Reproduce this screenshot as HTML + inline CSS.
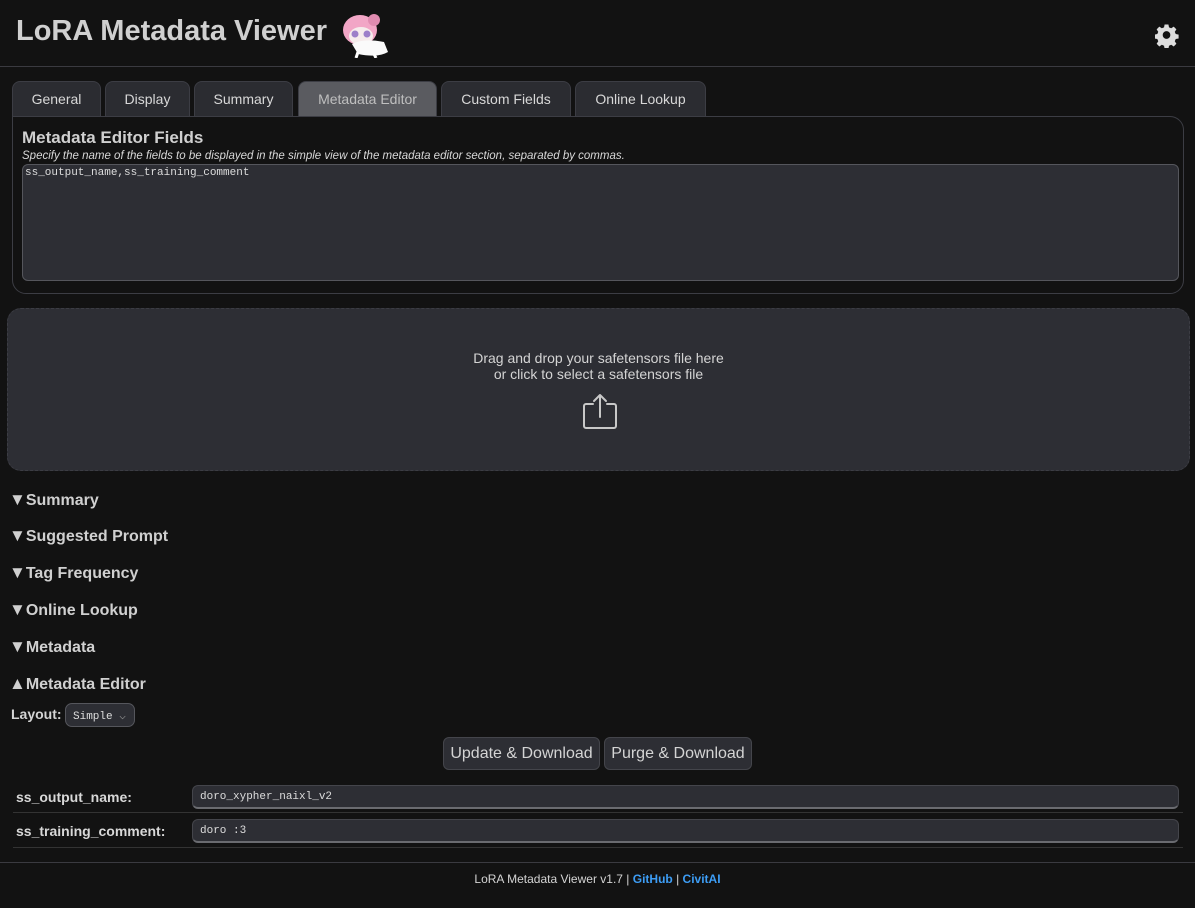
<!DOCTYPE html>
<html><head><meta charset="utf-8"><style>
*{box-sizing:border-box;margin:0;padding:0}
body{width:1195px;height:908px;background:#121212;color:#d4d4d4;font-family:"Liberation Sans",sans-serif;position:relative;overflow:hidden}
.abs{position:absolute}
h1{position:absolute;left:16px;top:15px;font-size:29px;font-weight:bold;color:#d0d0d0}
.hr{position:absolute;left:0;width:1195px;height:1px;background:#3a3a40}
.tab{position:absolute;top:81px;height:36px;background:#2b2c31;border:1px solid #3c3d44;border-bottom:none;border-radius:8px 8px 0 0;font-size:14px;color:#d8d8d8;text-align:center;line-height:35px}
.tab.act{background:#5a5b60;color:#bfbfbf}
.panel{position:absolute;left:12px;top:116px;width:1172px;height:178px;border:1px solid #3c3d44;border-radius:0 14px 14px 14px}
textarea{position:absolute;left:22px;top:164px;width:1157px;height:117px;background:#2d2e34;border:1px solid #55565c;border-radius:6px;color:#ddd;font-family:"Liberation Mono",monospace;font-size:11px;padding:2px;resize:none}
.drop{position:absolute;left:7px;top:308px;width:1183px;height:163px;background:#2d2e34;border:1px dashed #3c3d44;border-radius:14px;text-align:center;font-size:14px;color:#d4d4d4}
.sec{position:absolute;left:9px;font-size:16px;font-weight:bold;color:#d0d0d0}
.sec span{font-size:17px}
.btn{position:absolute;top:737px;height:33px;background:#2d2e34;border:1px solid #44454b;border-radius:6px;font-size:16px;color:#d4d4d4;line-height:31px;text-align:center}
.lbl{position:absolute;left:16px;font-size:14px;font-weight:bold;color:#d8d8d8}
.inp{position:absolute;left:192px;width:987px;height:24px;background:#2d2e34;border:1px solid #44454b;border-bottom:2px solid #6a6b70;border-radius:6px;font-family:"Liberation Mono",monospace;font-size:11px;color:#ddd;padding:5px 7px}
.rl{position:absolute;left:13px;width:1170px;height:1px;background:#333}
a{color:#3d9df5;font-weight:bold;text-decoration:none}
</style></head><body>
<h1>LoRA Metadata Viewer</h1>
<svg class="abs" style="left:338px;top:8px" width="56" height="50" viewBox="0 0 56 50">
<ellipse cx="22" cy="22" rx="17" ry="15" fill="#f2a6c6"/>
<circle cx="36" cy="12" r="6" fill="#e08bb0"/>
<ellipse cx="23" cy="28" rx="12" ry="9" fill="#f6ecec"/>
<circle cx="17" cy="26" r="3.5" fill="#9d7fc9"/><circle cx="29" cy="26" r="3.5" fill="#9d7fc9"/>
<path d="M14 36 Q26 30 46 34 L50 44 Q40 50 20 46 Z" fill="#fafafa"/>
<path d="M20 44 L18 50 M36 46 L38 50" stroke="#fff" stroke-width="3"/>
</svg>
<svg class="abs" style="left:1155px;top:24px" width="24" height="24" viewBox="0 0 24 24"><path fill="#ddd" fill-rule="evenodd" d="M10 1h4l.6 3 2.3 1 2.6-1.7 2.8 2.8L20.6 8.7l1 2.3 3 .6v4l-3 .6-1 2.3 1.7 2.6-2.8 2.8-2.6-1.7-2.3 1-.6 3h-4l-.6-3-2.3-1-2.6 1.7-2.8-2.8 1.7-2.6-1-2.3-3-.6v-4l3-.6 1-2.3L1.7 6.1 4.5 3.3 7.1 5 9.4 4zM12 8a4 4 0 100 8 4 4 0 000-8z" transform="translate(0,-0.5) scale(0.96)"/></svg>
<div class="hr" style="top:66px"></div>
<div class="tab" style="left:12px;width:89px">General</div>
<div class="tab" style="left:105px;width:85px">Display</div>
<div class="tab" style="left:194px;width:99px">Summary</div>
<div class="tab act" style="left:298px;width:139px">Metadata Editor</div>
<div class="tab" style="left:441px;width:130px">Custom Fields</div>
<div class="tab" style="left:575px;width:131px">Online Lookup</div>
<div class="panel"></div>
<div class="abs" style="left:22px;top:128px;font-size:17px;font-weight:bold;color:#d0d0d0">Metadata Editor Fields</div>
<div class="abs" style="left:22px;top:150px;font-size:11.5px;font-style:italic;color:#d8d8d8">Specify the name of the fields to be displayed in the simple view of the metadata editor section, separated by commas.</div>
<textarea>ss_output_name,ss_training_comment</textarea>
<div class="drop"><div style="margin-top:41px;line-height:16px">Drag and drop your safetensors file here<br>or click to select a safetensors file</div>
<svg style="margin-top:10px;display:block;margin-left:574px" width="36" height="40" viewBox="0 0 36 40"><path d="M18 25V3M12 9l6-6 6 6M11 12H4a2 2 0 00-2 2v20a2 2 0 002 2h28a2 2 0 002-2V14a2 2 0 00-2-2h-7" fill="none" stroke="#c8c8c8" stroke-width="2" stroke-linecap="round" stroke-linejoin="round"/></svg></div>
<div class="sec" style="top:490px"><span>▼</span>Summary</div>
<div class="sec" style="top:526px"><span>▼</span>Suggested Prompt</div>
<div class="sec" style="top:563px"><span>▼</span>Tag Frequency</div>
<div class="sec" style="top:600px"><span>▼</span>Online Lookup</div>
<div class="sec" style="top:637px"><span>▼</span>Metadata</div>
<div class="sec" style="top:674px"><span>▲</span>Metadata Editor</div>
<div class="abs" style="left:11px;top:706px;font-size:14px;font-weight:bold">Layout:</div>
<div class="abs" style="left:65px;top:703px;width:70px;height:24px;background:#2d2e34;border:1px solid #55565c;border-radius:7px;font-family:'Liberation Mono',monospace;font-size:11px;padding:5px 7px;color:#ddd">Simple <span style="color:#999">⌵</span></div>
<div class="btn" style="left:443px;width:157px">Update &amp; Download</div>
<div class="btn" style="left:604px;width:148px">Purge &amp; Download</div>
<div class="lbl" style="top:789px">ss_output_name:</div>
<div class="inp" style="top:785px">doro_xypher_naixl_v2</div>
<div class="rl" style="top:812px"></div>
<div class="lbl" style="top:823px">ss_training_comment:</div>
<div class="inp" style="top:819px">doro :3</div>
<div class="rl" style="top:847px"></div>
<div class="hr" style="top:862px"></div>
<div class="abs" style="left:0;width:1195px;text-align:center;top:872px;font-size:12px;color:#d4d4d4">LoRA Metadata Viewer v1.7 | <a>GitHub</a> | <a>CivitAI</a></div>
</body></html>
